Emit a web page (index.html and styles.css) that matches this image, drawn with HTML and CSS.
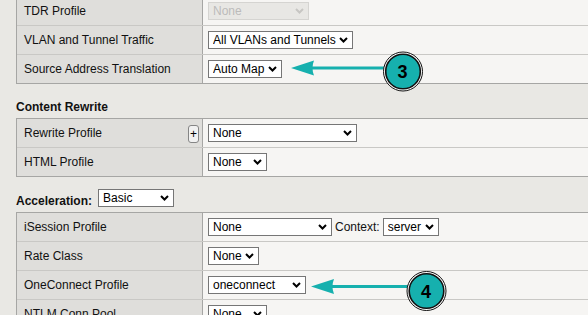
FILE: index.html
```html
<!DOCTYPE html>
<html lang="en">
<head>
  <meta charset="UTF-8">
  <title>Virtual Server Properties</title>
  <link rel="stylesheet" href="styles.css">
</head>
<body>
  <div class="page">
    <div class="props">
      <div class="row">
        <div class="label">TDR Profile</div>
        <div class="value"><select class="sel w-tdr" disabled><option>None</option></select></div>
      </div>
      <div class="row">
        <div class="label">VLAN and Tunnel Traffic</div>
        <div class="value"><select class="sel w-vlan"><option>All VLANs and Tunnels</option></select></div>
      </div>
      <div class="row">
        <div class="label">Source Address Translation</div>
        <div class="value"><select class="sel w-snat"><option>Auto Map</option></select></div>
      </div>
    </div>

    <div class="section-head"><span>Content Rewrite</span></div>
    <div class="props">
      <div class="row">
        <div class="label">Rewrite Profile <button class="plus" type="button">+</button></div>
        <div class="value"><select class="sel w-rewrite"><option>None</option></select></div>
      </div>
      <div class="row">
        <div class="label">HTML Profile</div>
        <div class="value"><select class="sel w-none"><option>None</option></select></div>
      </div>
    </div>

    <div class="section-head accel">
      <span>Acceleration:</span>
      <select class="sel w-accel"><option>Basic</option></select>
    </div>
    <div class="props">
      <div class="row">
        <div class="label">iSession Profile</div>
        <div class="value">
          <select class="sel w-isession"><option>None</option></select>
          <span>Context:</span>
          <select class="sel w-context"><option>server</option></select>
        </div>
      </div>
      <div class="row">
        <div class="label">Rate Class</div>
        <div class="value"><select class="sel w-rate"><option>None</option></select></div>
      </div>
      <div class="row">
        <div class="label">OneConnect Profile</div>
        <div class="value"><select class="sel w-oneconnect"><option>oneconnect</option></select></div>
      </div>
      <div class="row">
        <div class="label">NTLM Conn Pool</div>
        <div class="value"><select class="sel w-none"><option>None</option></select></div>
      </div>
    </div>
  </div>

  <!-- callout markers drawn over the form -->
  <svg class="callouts" width="588" height="315" viewBox="0 0 588 315">
    <g class="callout">
      <line x1="312" y1="68" x2="384" y2="68" stroke="#16b0ae" stroke-width="3"/>
      <path d="M291 68 L314 60.5 Q311 68 314 75.5 Z" fill="#16b0ae"/>
      <circle cx="403" cy="71.5" r="19.5" fill="#fff" stroke="#111" stroke-width="1"/>
      <circle cx="403" cy="71.5" r="17.3" fill="#16b0ae" stroke="#111" stroke-width="1.6"/>
      <text x="402.5" y="78" class="callout-num">3</text>
    </g>
    <g class="callout">
      <line x1="332" y1="286.5" x2="408" y2="286.5" stroke="#16b0ae" stroke-width="3"/>
      <path d="M311 286.5 L334 279 Q331 286.5 334 294 Z" fill="#16b0ae"/>
      <circle cx="426.5" cy="291" r="19.5" fill="#fff" stroke="#111" stroke-width="1"/>
      <circle cx="426.5" cy="291" r="17.3" fill="#16b0ae" stroke="#111" stroke-width="1.6"/>
      <text x="426" y="297.5" class="callout-num">4</text>
    </g>
  </svg>
</body>
</html>
```

FILE: styles.css
```css
html, body {
  margin: 0;
  overflow: hidden;
}
body {
  position: relative;
  background-color: #e9e8e4;
  font-family: "Liberation Sans", Arial, sans-serif;
  font-size: 12px;
  color: #111;
  width: 588px;
  height: 315px;
}
.page {
  margin-top: -4px;
  padding-left: 16px;
}
.props {
  width: 720px;
  border: 1px solid #a6a6a4;
}
.row {
  display: grid;
  grid-template-columns: 186px 1fr;
  height: 28px;
}
.row + .row {
  border-top: 1px solid #c9c8c5;
}
.label {
  display: flex;
  align-items: center;
  justify-content: space-between;
  padding: 0 3px 0 7px;
  background-color: #dfdedb;
  border-right: 1px solid #a6a6a4;
  line-height: 14px;
}
.value {
  display: flex;
  align-items: center;
  gap: 3px;
  padding-left: 5px;
  background-color: #f6f5f3;
  line-height: 14px;
}
.section-head {
  display: flex;
  align-items: flex-end;
  gap: 6px;
  height: 30px;
  margin-bottom: 4px;
  font-weight: bold;
  line-height: 14px;
}
.section-head.accel {
  height: 31px;
}
.section-head.accel .sel {
  margin-bottom: 1px;
}
.sel {
  -webkit-appearance: none;
  appearance: none;
  box-sizing: border-box;
  height: 18px;
  padding: 0 15px 0 4px;
  border: 1px solid #767676;
  border-radius: 0;
  background: #fff url("data:image/svg+xml,%3Csvg xmlns='http://www.w3.org/2000/svg' width='9' height='6' viewBox='0 0 9 6'%3E%3Cpath d='M1 1l3.5 3.5L8 1' fill='none' stroke='%23000' stroke-width='2'/%3E%3C/svg%3E") no-repeat right 4px center;
  color: #000;
  font-family: "Liberation Sans", Arial, sans-serif;
  font-size: 12px;
  font-weight: normal;
}
.sel:disabled {
  background-color: #e3e2de;
  background-image: url("data:image/svg+xml,%3Csvg xmlns='http://www.w3.org/2000/svg' width='9' height='6' viewBox='0 0 9 6'%3E%3Cpath d='M1 1l3.5 3.5L8 1' fill='none' stroke='%23b4b3af' stroke-width='2'/%3E%3C/svg%3E");
  border-color: #c8c7c3;
  color: #a3a3a3;
}
.plus {
  box-sizing: border-box;
  width: 11px;
  height: 18px;
  margin-top: 2px;
  padding: 0;
  border: 1px solid #858585;
  border-radius: 3px;
  background-color: #f1f1f1;
  color: #000;
  font-family: "Liberation Sans", Arial, sans-serif;
  font-size: 12px;
  line-height: 14px;
}
.w-tdr { width: 101px; }
.w-vlan { width: 145px; }
.w-snat { width: 74px; }
.w-rewrite { width: 149px; }
.w-none { width: 59px; }
.w-accel { width: 76px; }
.w-isession { width: 124px; }
.w-context { width: 56px; }
.w-rate { width: 51px; }
.w-oneconnect { width: 98px; }
.callouts {
  position: absolute;
  top: 0;
  left: 0;
  pointer-events: none;
}
.callout-num {
  font-family: "Liberation Sans", Arial, sans-serif;
  font-size: 18px;
  font-weight: bold;
  fill: #000;
  text-anchor: middle;
}
```
